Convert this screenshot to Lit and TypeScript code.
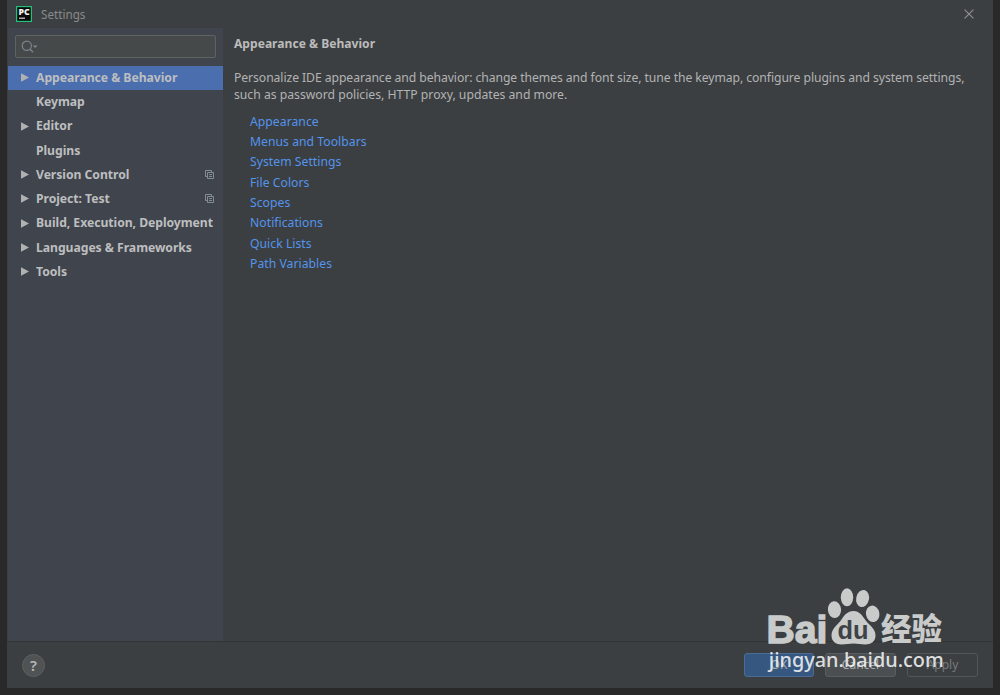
import { LitElement, html, css, svg, nothing } from 'lit';
import { customElement, property } from 'lit/decorators.js';
import { classMap } from 'lit/directives/class-map.js';

interface Category {
  label: string;
  expandable?: boolean;
  selected?: boolean;
  projectLevel?: boolean;
}

const CATEGORIES: Category[] = [
  { label: 'Appearance & Behavior', expandable: true, selected: true },
  { label: 'Keymap' },
  { label: 'Editor', expandable: true },
  { label: 'Plugins' },
  { label: 'Version Control', expandable: true, projectLevel: true },
  { label: 'Project: Test', expandable: true, projectLevel: true },
  { label: 'Build, Execution, Deployment', expandable: true },
  { label: 'Languages & Frameworks', expandable: true },
  { label: 'Tools', expandable: true },
];

const LINKS = [
  'Appearance',
  'Menus and Toolbars',
  'System Settings',
  'File Colors',
  'Scopes',
  'Notifications',
  'Quick Lists',
  'Path Variables',
];

// center x, center y, radius x, radius y, rotation
const TOES = [
  [834.5, 609.7, 6.6, 8.4, -4],
  [847, 597.3, 6.2, 9, 0],
  [862.6, 598.5, 6.4, 8.6, 12],
  [872.7, 613.8, 6.7, 8.3, -10],
];

@customElement('settings-title-bar')
export class SettingsTitleBar extends LitElement {
  render() {
    return html`
      <svg class="logo" viewBox="0 0 16 16" width="16" height="16">
        <rect width="16" height="16" fill="#21c07c" />
        <rect x="1.2" y="1.2" width="13.6" height="13.6" fill="#0a0a0a" />
        <text x="2.4" y="8.6" class="logo-text" textLength="11.2" lengthAdjust="spacingAndGlyphs">PC</text>
        <rect x="3" y="11.6" width="6" height="1.2" fill="#d8d8d8" />
      </svg>
      <span class="title">Settings</span>
      <svg class="close" viewBox="0 0 10 10" width="10" height="10">
        <path d="M.6 .6 9.4 9.4M9.4 .6 .6 9.4" stroke="#929495" stroke-width="1.1" />
      </svg>
    `;
  }

  static styles = css`
    :host {
      display: flex;
      align-items: center;
      box-sizing: border-box;
      height: 28px;
      padding: 0 19px 0 9px;
    }

    .logo-text {
      font: 800 8.5px 'Open Sans', sans-serif;
      fill: #f4f4f4;
    }

    .title {
      margin-left: 9px;
      color: #888a8b;
      font-size: 11.7px;
    }

    .close {
      margin-left: auto;
    }
  `;
}

@customElement('settings-tree')
export class SettingsTree extends LitElement {
  @property({ attribute: false }) items: Category[] = [];

  render() {
    return html`
      <div class="search">
        <svg viewBox="0 0 18 14" width="18" height="14">
          <circle cx="5.8" cy="5.8" r="4.6" fill="none" stroke="#7b858c" stroke-width="1.2" />
          <path d="M9 9 12 12.2" stroke="#7b858c" stroke-width="1.4" />
          <path d="M11.6 5.4h5l-2.5 2.7z" fill="#7b858c" />
        </svg>
      </div>
      <div class="rows">${this.items.map((item) => this._renderRow(item))}</div>
    `;
  }

  _renderRow(item: Category) {
    return html`
      <div class=${classMap({ row: true, selected: !!item.selected })}>
        <span class="arrow">
          ${item.expandable
            ? html`<svg viewBox="0 0 8 9" width="8" height="9">
                <path d="M0 .2 8 4.5 0 8.8z" fill="#b0b1b3" />
              </svg>`
            : nothing}
        </span>
        <span class="label">${item.label}</span>
        ${item.projectLevel
          ? html`<svg class="copy" viewBox="0 0 9 9" width="9" height="9">
              <path
                d="M2 6.5H.5V.5h6V2M2.5 2.5h6v6h-6zM4 4.6h3M4 6.5h3"
                fill="none"
                stroke="#8a949b"
                stroke-width=".9"
              />
            </svg>`
          : nothing}
      </div>
    `;
  }

  static styles = css`
    :host {
      display: block;
      margin-left: 1px;
      background: #40444d;
    }

    .search {
      display: flex;
      align-items: center;
      box-sizing: border-box;
      height: 23px;
      margin: 7px 7px 8px;
      padding-left: 5px;
      border: 1px solid #606364;
      border-radius: 2px;
      background: #454949;
    }

    .row {
      display: flex;
      align-items: center;
      box-sizing: border-box;
      height: 24.25px;
      padding: 0 9px 1px 13px;
      color: #bdbebf;
      font-size: 12.2px;
      font-weight: 700;
      white-space: nowrap;
    }

    .selected {
      background: #4b6eaf;
    }

    .arrow {
      display: flex;
      flex: none;
      width: 15px;
    }

    .label {
      padding-bottom: 0.6px;
      letter-spacing: -0.04px;
    }

    .copy {
      flex: none;
      margin-left: auto;
    }
  `;
}

@customElement('settings-page')
export class SettingsPage extends LitElement {
  @property({ attribute: false }) links: string[] = [];

  render() {
    return html`
      <h1>Appearance &amp; Behavior</h1>
      <p>
        <span class="tight">Personalize IDE appearance and behavior: change themes and font size, tune the keymap, configure plugins and system settings,</span><br />
        such as password policies, HTTP proxy, updates and more.
      </p>
      <nav>${this.links.map((link) => html`<a>${link}</a>`)}</nav>
    `;
  }

  static styles = css`
    :host {
      display: block;
      padding: 7px 0 0 11px;
      color: #bbbbbb;
    }

    h1 {
      margin: 0;
      font-size: 12.1px;
      font-weight: 700;
      line-height: 18px;
    }

    p {
      margin: 16px 0 0;
      color: #b2b3b4;
      font-size: 12.2px;
      line-height: 17px;
      white-space: nowrap;
    }

    .tight {
      letter-spacing: -0.072px;
    }

    nav {
      display: flex;
      flex-direction: column;
      align-items: flex-start;
      padding: 8.7px 0 0 16px;
    }

    a {
      height: 20.35px;
      color: #5394ec;
      font-size: 12.2px;
      line-height: 20.35px;
      letter-spacing: 0.03px;
    }
  `;
}

@customElement('settings-footer')
export class SettingsFooter extends LitElement {
  render() {
    return html`
      <span class="help">?</span>
      <div class="buttons">
        <button class="primary">OK</button>
        <button>Cancel</button>
        <button class="disabled">Apply</button>
      </div>
    `;
  }

  static styles = css`
    :host {
      display: flex;
      align-items: center;
      justify-content: space-between;
      box-sizing: border-box;
      height: 47px;
      padding: 0 15px;
      border-top: 1px solid #323536;
    }

    .help {
      box-sizing: border-box;
      width: 23px;
      height: 23px;
      border: 1px solid #5d6061;
      border-radius: 50%;
      background: #4f5354;
      color: #b4b8ba;
      font-size: 15px;
      font-weight: 600;
      line-height: 21px;
      text-align: center;
    }

    .buttons {
      display: flex;
      gap: 11px;
    }

    button {
      box-sizing: border-box;
      width: 71px;
      height: 24px;
      padding: 0;
      border: 1px solid #5b5e60;
      border-radius: 3px;
      background: #4b4f51;
      color: #a9abac;
      font: inherit;
      font-size: 12px;
      line-height: 22px;
    }

    .primary {
      width: 70px;
      border-color: #4a6c94;
      background: #365880;
    }

    .disabled {
      background: none;
      border-color: #535658;
      color: #777a7b;
    }
  `;
}

@customElement('site-watermark')
export class SiteWatermark extends LitElement {
  render() {
    return html`
      <svg viewBox="760 580 190 95" width="190" height="95">
        <g class="mark">
          <text class="bai" x="766.5" y="642.6" textLength="61" lengthAdjust="spacingAndGlyphs">Bai</text>
          ${TOES.map(
            ([cx, cy, rx, ry, turn]) => svg`
              <ellipse cx=${cx} cy=${cy} rx=${rx} ry=${ry} transform="rotate(${turn} ${cx} ${cy})" />
            `,
          )}
          <path
            d="M853.5 611C847.5 611 844 615.5 841.5 619.5C838.5 624.5 831.5 628 831.5 635.5C831.5 641.5 836 644.5 841.5 644.5C846 644.5 849 643.5 853.5 643.5C858 643.5 861 644.5 865 644.5C871 644.5 875.5 641.5 875.5 635.5C875.5 628 868 624.5 865 619.5C862 615.5 859.5 611 853.5 611Z"
          />
          <text class="jingyan" x="881" y="640" textLength="61" lengthAdjust="spacingAndGlyphs">经验</text>
        </g>
        <text class="du" x="837.5" y="638.5" textLength="31" lengthAdjust="spacingAndGlyphs">du</text>
        <text class="url" x="768.8" y="666.7" textLength="175" lengthAdjust="spacingAndGlyphs">jingyan.baidu.com</text>
      </svg>
    `;
  }

  static styles = css`
    :host {
      display: block;
      pointer-events: none;
    }

    svg {
      display: block;
    }

    .mark {
      fill: #c9cbcb;
    }

    .bai {
      font: 700 39.5px 'Liberation Sans', sans-serif;
      stroke: #c9cbcb;
      stroke-width: 1.4px;
    }

    .jingyan {
      font: 900 30.5px 'Noto Sans CJK SC', sans-serif;
    }

    .du {
      font: 700 25px 'Liberation Sans', sans-serif;
      fill: #3f4345;
    }

    .url {
      font: 500 20px 'Noto Sans', sans-serif;
      fill: #f2f3f4;
      fill-opacity: 0.9;
    }
  `;
}

@customElement('app-root')
export class AppRoot extends LitElement {
  render() {
    return html`
      <div class="dialog">
        <settings-title-bar></settings-title-bar>
        <div class="body">
          <settings-tree .items=${CATEGORIES}></settings-tree>
          <settings-page .links=${LINKS}></settings-page>
        </div>
        <settings-footer></settings-footer>
      </div>
      <site-watermark class="watermark"></site-watermark>
    `;
  }

  static styles = css`
    :host {
      display: block;
      position: relative;
      box-sizing: border-box;
      width: 1000px;
      height: 695px;
      padding: 0 7px 7px;
      overflow: hidden;
      background: #292929;
      font-family: 'Noto Sans', 'Open Sans', sans-serif;
    }

    .dialog {
      display: flex;
      flex-direction: column;
      box-sizing: border-box;
      height: 688px;
      background: #3c3f41;
    }

    .body {
      display: grid;
      flex: 1;
      grid-template-columns: 216px 1fr;
      min-height: 0;
    }

    .watermark {
      position: absolute;
      left: 760px;
      top: 580px;
    }
  `;
}

declare global {
  interface HTMLElementTagNameMap {
    'app-root': AppRoot;
    'settings-title-bar': SettingsTitleBar;
    'settings-tree': SettingsTree;
    'settings-page': SettingsPage;
    'settings-footer': SettingsFooter;
    'site-watermark': SiteWatermark;
  }
}
